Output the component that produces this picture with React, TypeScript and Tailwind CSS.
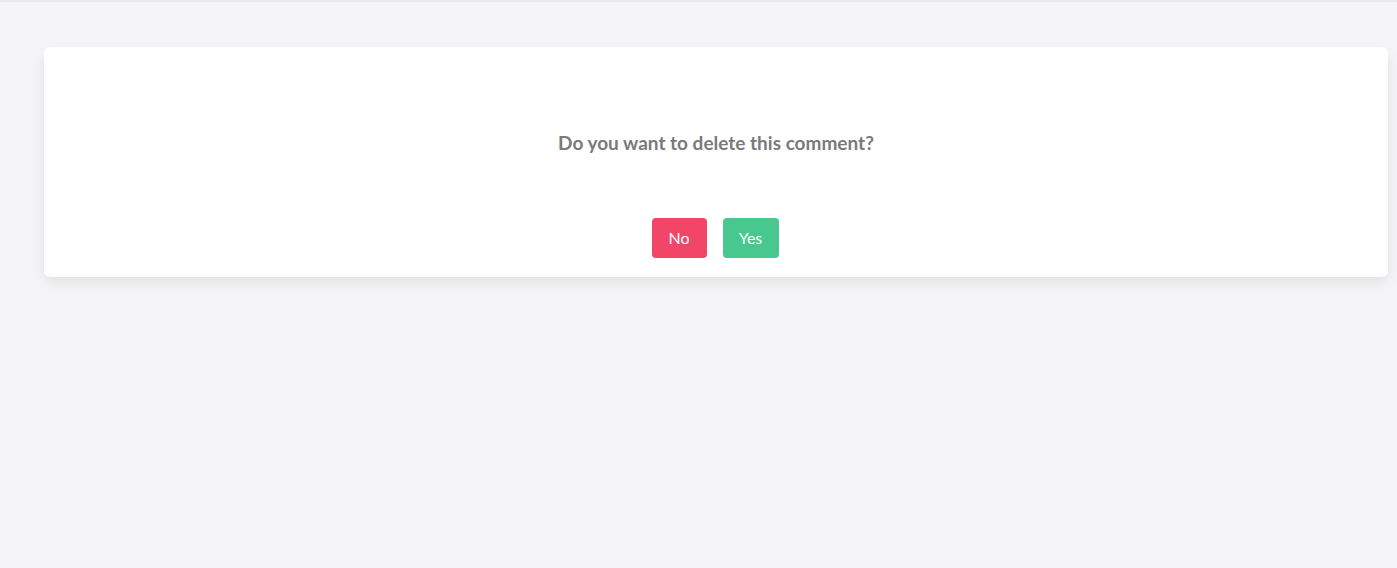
export default function App() {
  return (
    <div className="min-h-[568px] bg-[#f5f5f7] border-t-2 border-[#e8e8ec] pt-[45px] pl-[44px] pr-[9px] font-['Lato',sans-serif]">
      <div className="bg-white rounded-md shadow-[0_6px_14px_rgba(10,10,10,0.08)] h-[230px] flex flex-col items-center">
        <p className="mt-[84px] text-[19px] leading-[24px] font-bold text-[#7a7a7a]">
          Do you want to delete this comment?
        </p>
        <div className="mt-[63px] flex gap-4 pr-[2px]">
          <button className="h-10 w-[55px] rounded-[4px] bg-[#f14668] text-white text-[16px]">No</button>
          <button className="h-10 w-[56px] rounded-[4px] bg-[#48c78e] text-white text-[16px]">Yes</button>
        </div>
      </div>
    </div>
  );
}
